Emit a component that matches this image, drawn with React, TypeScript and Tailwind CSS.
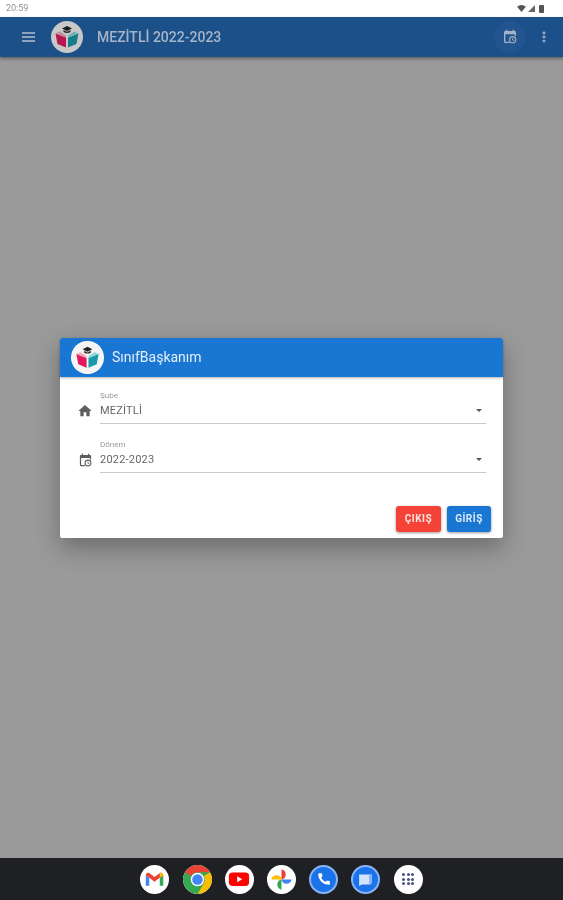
import { MoreVertical, Phone } from "lucide-react";

const Logo = ({ size }: { size: number }) => (
  <svg width={size} height={size} viewBox="0 0 32 32">
    <circle cx="16" cy="16" r="16" fill="#f4f4f4" />
    <path d="M16 5l5 2.500-5 2.500-5-2.500z" fill="#222" />
    <path d="M12.500 9v2c2 1.200 5 1.200 7 0V9l-3.500 1.800z" fill="#333" />
    <path d="M4.500 12.500l10.500 4v10l-8.500-3.500z" fill="#e0195f" />
    <path d="M27.500 12.500l-10.500 4v10l8.500-3.500z" fill="#1a9aa8" />
    <path d="M4.500 12.500l4-2 6.500 4v2z" fill="#f2a7b8" />
    <path d="M27.500 12.500l-4-2-6.500 4v2z" fill="#8fd6dc" />
  </svg>
);

const CalendarClock = ({ className }: { className: string }) => (
  <svg viewBox="0 0 24 24" className={className} fill="currentColor">
    <path d="M5 21a2 2 0 0 1-2-2V5c0-1.110.89-2 2-2h1V1h2v2h8V1h2v2h1a2 2 0 0 1 2 2v5.500h-2V8H5v11h5.500l1.500 2z" />
    <path d="M16 10.500a5.500 5.500 0 1 0 0 11 5.500 5.500 0 0 0 0-11zm0 1.700a3.800 3.800 0 1 1 0 7.600 3.800 3.800 0 0 1 0-7.600zM15.300 13.500h1.300v2.300l1.800 1.100-.6 1-2.500-1.500z" />
  </svg>
);

const HomeIcon = ({ className }: { className: string }) => (
  <svg viewBox="0 0 24 24" className={className} fill="currentColor">
    <path d="M10 20v-6h4v6h5v-8h3L12 3 2 12h3v8z" />
  </svg>
);

const Gmail = () => (
  <svg viewBox="0 0 24 24" className="w-[21px] h-[21px]">
    <path d="M2 7v12h4V10z" fill="#4285f4" />
    <path d="M18 10v9h4V7z" fill="#34a853" />
    <path d="M2 7c0-2.500 2.600-3.500 4.300-2.200L12 9.200l5.700-4.400C19.400 3.500 22 4.500 22 7l-4 3-6 4.500L6 10z" fill="#ea4335" />
    <path d="M18 10l4-3c0-2.500-2.600-3.500-4.300-2.200L18 5z" fill="#fbbc04" />
  </svg>
);

const Chrome = () => (
  <svg viewBox="0 0 32 32" className="w-[29px] h-[29px]">
    <circle cx="16" cy="16" r="16" fill="#34a853" />
    <path d="M2.100 8A16 16 0 0 1 29.900 8H16a8 8 0 0 0-7 4z" fill="#ea4335" />
    <path d="M29.900 8A16 16 0 0 1 16 32l7-12a8 8 0 0 0 0-8z" fill="#fbbc04" />
    <circle cx="16" cy="16" r="7.500" fill="#fff" />
    <circle cx="16" cy="16" r="5.800" fill="#4285f4" />
  </svg>
);

const YouTube = () => (
  <svg viewBox="0 0 24 24" className="w-[22px] h-[22px]">
    <rect x="1" y="5" width="22" height="14.500" rx="4" fill="#ff0000" />
    <path d="M10 9l5.500 3.200L10 15.500z" fill="#fff" />
  </svg>
);

const Photos = () => (
  <svg viewBox="0 0 24 24" className="w-[23px] h-[23px]">
    <path d="M12 12V1.500h.500a5.500 5.500 0 0 1 0 10.500z" fill="#ea4335" />
    <path d="M12 12h10.500v.500a5.500 5.500 0 0 1-10.500 0z" fill="#4285f4" />
    <path d="M12 12v10.500h-.500a5.500 5.500 0 0 1 0-10.500z" fill="#34a853" />
    <path d="M12 12H1.500v-.500a5.500 5.500 0 0 1 10.500 0z" fill="#fbbc04" />
  </svg>
);

const Messages = () => (
  <svg viewBox="0 0 24 24" className="w-[17px] h-[17px]">
    <path d="M3 5h18v11a3 3 0 0 1-3 3H7l-4 2z" fill="#d2e3fc" />
    <path d="M17 5h4v11a3 3 0 0 1-3 3h-1z" fill="#8ab4f8" />
  </svg>
);

const Apps = () => (
  <div className="grid grid-cols-3 gap-[1.500px]">
    {[0, 1, 2, 3, 4, 5, 6, 7, 8].map((i) => (
      <span key={i} className="w-[3px] h-[3px] rounded-full bg-[#4a5580]" />
    ))}
  </div>
);

const Field = ({ label, value, icon }: { label: string; value: string; icon: React.ReactNode }) => (
  <div className="flex items-end h-[46px]">
    <div className="w-[40px] flex justify-center pb-[5px] pl-[10px] text-[#5f5f5f]">{icon}</div>
    <div className="flex-1 border-b border-[#c9c9c9] pb-[5px] flex flex-col">
      <span className="text-[8px] leading-[10px] text-[#9a9a9a]">{label}</span>
      <div className="flex items-center justify-between mt-[2px] pr-[4px]">
        <span className="text-[11px] leading-[15px] text-[#666] tracking-[0.2px]">{value}</span>
        <span className="w-0 h-0 border-x-[3.500px] border-x-transparent border-t-[3.500px] border-t-[#555]" />
      </div>
    </div>
  </div>
);

const DockIcon = ({ className, children }: { className: string; children: React.ReactNode }) => (
  <div className={`w-[29px] h-[29px] rounded-full flex items-center justify-center overflow-hidden ${className}`}>
    {children}
  </div>
);

export default function App() {
  return (
    <div className="w-[563px] h-[900px] flex flex-col bg-[#9a9a9a] overflow-hidden blur-[0.5px] font-['Roboto',sans-serif]">
      <div className="h-[17px] bg-white flex items-center justify-between pl-[6px] pr-[19px] shrink-0">
        <span className="text-[9px] text-[#8f8f8f]">20:59</span>
        <div className="flex items-center gap-[2px]">
          <svg viewBox="0 0 10 8" className="w-[9px] h-[7px]"><path d="M0 2a7.500 7.500 0 0 1 10 0L5 8z" fill="#555" /></svg>
          <svg viewBox="0 0 8 8" className="w-[7px] h-[7px]"><path d="M8 0v8H0z" fill="#666" /></svg>
          <span className="w-[5px] h-[8px] ml-[2px] rounded-[1px] bg-[#555]" />
        </div>
      </div>

      <header className="h-[40px] bg-[#1b5089] shrink-0 flex items-center shadow-[0_2px_3px_rgba(0,0,0,0.35)] relative">
        <div className="ml-[22px] w-[13px] flex flex-col gap-[2px]">
          <span className="h-[2px] bg-[#8fa3bc]" />
          <span className="h-[2px] bg-[#8fa3bc]" />
          <span className="h-[2px] bg-[#8fa3bc]" />
        </div>
        <div className="ml-[16px] brightness-[0.82]"><Logo size={32} /></div>
        <span className="ml-[14px] text-[14px] font-medium text-[#a7b4c7]">MEZİTLİ 2022-2023</span>
        <div className="ml-auto w-[32px] h-[32px] rounded-full bg-[#225590] flex items-center justify-center">
          <CalendarClock className="w-[16px] h-[16px] text-[#a3b2c6]" />
        </div>
        <MoreVertical className="w-[14px] h-[14px] ml-[11px] mr-[12px] text-[#a3b2c6]" strokeWidth={3} />
      </header>

      <main className="flex-1 flex items-center justify-center pb-[40px] px-[60px]">
        <div className="w-[443px] h-[200px] bg-white rounded-[2px] shadow-[0_10px_24px_rgba(0,0,0,0.3)] flex flex-col">
          <div className="h-[39px] shrink-0 bg-[#1976d2] rounded-t-[2px] flex items-center pl-[11px] shadow-[0_1px_3px_rgba(0,0,0,0.3)]">
            <div className="rounded-full bg-white p-[1px]"><Logo size={31} /></div>
            <span className="ml-[8px] text-[14px] text-[#e6f0fa]">SınıfBaşkanım</span>
          </div>
          <div className="pr-[17px] pt-[1px] flex flex-col gap-[3px]">
            <Field label="Şube" value="MEZİTLİ" icon={<HomeIcon className="w-[16px] h-[16px]" />} />
            <Field label="Dönem" value="2022-2023" icon={<CalendarClock className="w-[15px] h-[15px]" />} />
          </div>
          <div className="mt-auto flex justify-end gap-[6px] pr-[12px] pb-[6px]">
            <button className="w-[45px] h-[26px] rounded-[3px] bg-[#f44336] text-[#fde3e1] text-[10px] tracking-[0.5px] font-bold shadow-[0_1px_3px_rgba(0,0,0,0.4)]">ÇIKIŞ</button>
            <button className="w-[44px] h-[26px] rounded-[3px] bg-[#1976d2] text-[#dcebfa] text-[10px] tracking-[0.5px] font-bold shadow-[0_1px_3px_rgba(0,0,0,0.4)]">GİRİŞ</button>
          </div>
        </div>
      </main>

      <nav className="h-[42px] shrink-0 bg-[#1f2023] flex items-center justify-center gap-[13.200px]">
        <DockIcon className="bg-white"><Gmail /></DockIcon>
        <DockIcon className="bg-white"><Chrome /></DockIcon>
        <DockIcon className="bg-white"><YouTube /></DockIcon>
        <DockIcon className="bg-white"><Photos /></DockIcon>
        <DockIcon className="bg-[#1a73e8] border-2 border-[#8ab4f8]">
          <Phone className="w-[14px] h-[14px] text-white" fill="currentColor" strokeWidth={0} />
        </DockIcon>
        <DockIcon className="bg-[#1a73e8] border-2 border-[#8ab4f8]"><Messages /></DockIcon>
        <DockIcon className="bg-white"><Apps /></DockIcon>
      </nav>
    </div>
  );
}
